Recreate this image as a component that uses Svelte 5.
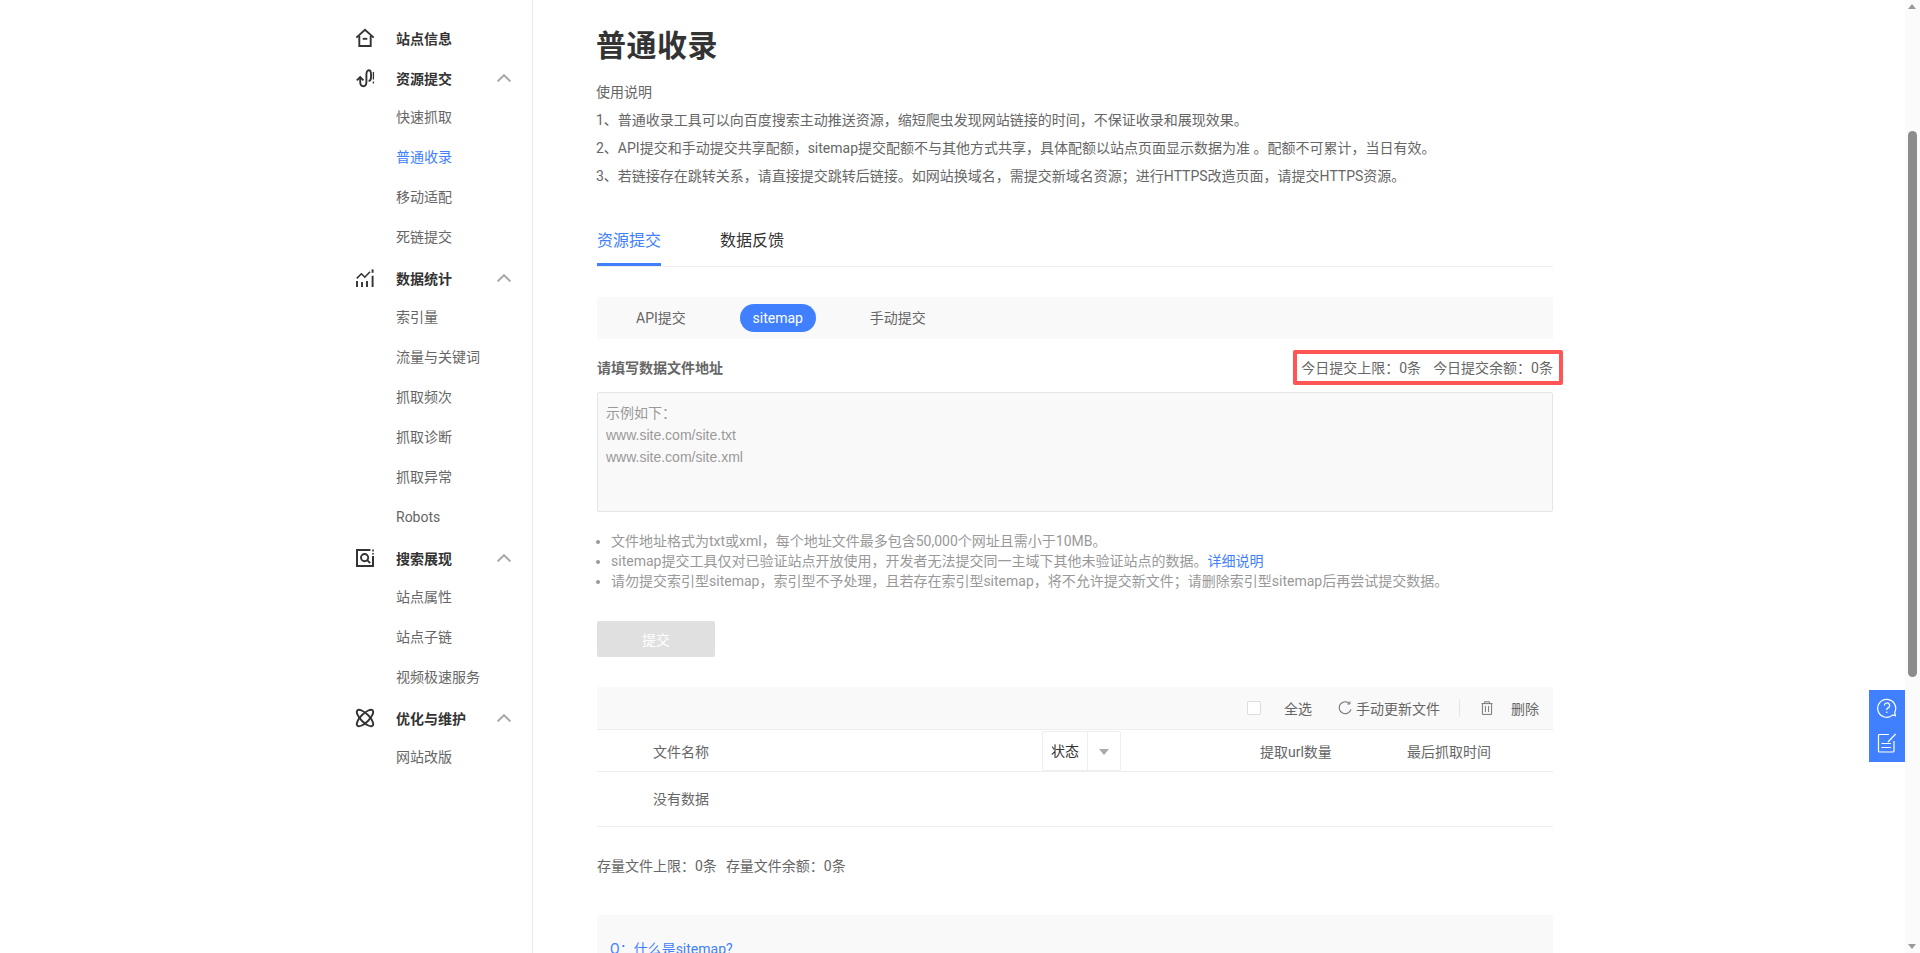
<script>
  const nav = [
    { title: '站点信息', icon: 'home', items: [] },
    { title: '资源提交', icon: 'link', open: true, items: ['快速抓取', '普通收录', '移动适配', '死链提交'] },
    { title: '数据统计', icon: 'stats', open: true, items: ['索引量', '流量与关键词', '抓取频次', '抓取诊断', '抓取异常', 'Robots'] },
    { title: '搜索展现', icon: 'search', open: true, items: ['站点属性', '站点子链', '视频极速服务'] },
    { title: '优化与维护', icon: 'atom', open: true, items: ['网站改版'] }
  ];
  const usage = [
    '使用说明',
    '1、普通收录工具可以向百度搜索主动推送资源，缩短爬虫发现网站链接的时间，不保证收录和展现效果。',
    '2、API提交和手动提交共享配额，sitemap提交配额不与其他方式共享，具体配额以站点页面显示数据为准 。配额不可累计，当日有效。',
    '3、若链接存在跳转关系，请直接提交跳转后链接。如网站换域名，需提交新域名资源；进行HTTPS改造页面，请提交HTTPS资源。'
  ];
</script>

<div class="page">
  <aside class="sidebar">
    {#each nav as group}
      <div class="nav-head">
        <svg class="nav-icon" viewBox="0 0 18 18" fill="none" stroke="#333" stroke-width="1.9">
          {#if group.icon === 'home'}
            <path d="M0.3 8.6 L9 0.8 L17.7 8.6" />
            <path d="M3.3 7 V17 H14.7 V7" />
            <path d="M6.7 9.8 H11.3" />
          {:else if group.icon === 'link'}
            <path d="M0.8 11.4 L4.2 8 L7.4 11.4" />
            <path d="M4.2 8.8 V13 C4.2 15.8 5.6 17.2 7.4 17.2 C9.4 17.2 10.4 15.6 10.4 13 V5.6 C10.4 2.8 11.4 1.2 12.8 1.2 C14.4 1.2 15 2.8 15 5.6 V8.4 C15 10.6 14 11.8 12.6 12" />
            <path d="M17.4 3 V10.6 M17.4 12.6 V14.4" stroke-width="1.3" />
          {:else if group.icon === 'stats'}
            <path d="M1 18 V12 M6 18 V13 M11 18 V12 M16.6 18 V6.8" />
            <path d="M0.8 9.4 L5.4 4.8 L8.8 8.2 L14 2.8" stroke-width="1.6" />
            <path d="M16.6 0.4 V3.8" />
          {:else if group.icon === 'search'}
            <path d="M14.4 1 H1 V17 H17 V7" stroke-width="2" />
            <path d="M17 0.4 V2.6 M17 4 V5.6" stroke-width="1.6" />
            <circle cx="8.6" cy="8.6" r="3.6" />
            <path d="M11.2 11.2 L14.2 14.2" />
          {:else}
            <ellipse cx="9" cy="9" rx="10.8" ry="4.2" transform="rotate(45 9 9)" />
            <ellipse cx="9" cy="9" rx="10.8" ry="4.2" transform="rotate(-45 9 9)" />
          {/if}
        </svg>
        <span class="nav-title">{group.title}</span>
        {#if group.open}
          <svg class="chev" viewBox="0 0 14 8" fill="none" stroke="#aaa" stroke-width="2"><path d="M0.6 7.4 L7 1.2 L13.4 7.4" /></svg>
        {/if}
      </div>
      {#each group.items as item}
        <div class="nav-item" class:active={item === '普通收录'}>{item}</div>
      {/each}
    {/each}
  </aside>

  <main class="main">
    <h1>普通收录</h1>
    <div class="usage">
      {#each usage as line}<p>{line}</p>{/each}
    </div>

    <div class="tabs">
      <div class="tab on">资源提交</div>
      <div class="tab">数据反馈</div>
    </div>

    <div class="seg">
      <span class="seg-text">API提交</span>
      <span class="pill">sitemap</span>
      <span class="seg-text">手动提交</span>
    </div>

    <div class="label-row">
      <strong>请填写数据文件地址</strong>
      <div class="quota">
        <span>今日提交上限：0条</span>
        <span>今日提交余额：0条</span>
        <i class="mark"></i>
      </div>
    </div>

    <div class="textarea">
      <div>示例如下：</div>
      <div>www.site.com/site.txt</div>
      <div>www.site.com/site.xml</div>
    </div>

    <ul class="notes">
      <li>文件地址格式为txt或xml，每个地址文件最多包含50,000个网址且需小于10MB。</li>
      <li>sitemap提交工具仅对已验证站点开放使用，开发者无法提交同一主域下其他未验证站点的数据。<a href="#top">详细说明</a></li>
      <li>请勿提交索引型sitemap，索引型不予处理，且若存在索引型sitemap，将不允许提交新文件；请删除索引型sitemap后再尝试提交数据。</li>
    </ul>

    <button class="submit" disabled>提交</button>

    <div class="toolbar">
      <span class="check"></span>
      <span class="all">全选</span>
      <svg class="refresh" viewBox="0 0 14 14" fill="none" stroke="#777" stroke-width="1.1">
        <path d="M11.6 2.6 A6 6 0 1 0 13 8.4" />
        <path d="M11.9 0.4 V3 H9.3" stroke-width="1" />
      </svg>
      <span class="update">手动更新文件</span>
      <i class="sep"></i>
      <svg class="trash" viewBox="0 0 12 14" fill="none" stroke="#777" stroke-width="1">
        <path d="M0.5 2.6 H11.5 M3.5 2.6 V0.8 H8.5 V2.6 M1.4 2.6 V13.4 H10.6 V2.6 M4.4 5 V11 M7.6 5 V11" />
      </svg>
      <span>删除</span>
    </div>

    <div class="thead">
      <span>文件名称</span>
      <div class="filter">
        <span class="f-label">状态</span>
        <span class="f-arrow"></span>
      </div>
      <span class="c-num">提取url数量</span>
      <span>最后抓取时间</span>
    </div>
    <div class="empty">没有数据</div>

    <div class="storage">
      <span>存量文件上限：0条</span>
      <span>存量文件余额：0条</span>
    </div>

    <div class="faq"><a href="#top">Q：什么是sitemap?</a></div>
  </main>

  <div class="scrollbar">
    <i class="arrow up"></i>
    <i class="thumb"></i>
    <i class="arrow down"></i>
  </div>

  <div class="float">
    <svg viewBox="0 0 20 20" fill="none" stroke="#fff" stroke-width="1.2">
      <path d="M18.4 17.8 L15.8 16.9 A9 9 0 1 1 17.7 14.4 Z" />
      <path d="M7.4 7.6 A2.6 2.6 0 1 1 10.6 10.1 C10 10.4 9.8 10.8 9.8 12" />
      <path d="M9.8 13.6 V15" />
    </svg>
    <svg viewBox="0 0 20 20" fill="none" stroke="#fff" stroke-width="1.2">
      <path d="M12 1.5 H2.5 A1 1 0 0 0 1.5 2.5 V18 A1 1 0 0 0 2.5 19 H16 A1 1 0 0 0 17 18 V8" />
      <path d="M11 9 L18.6 1" />
      <path d="M4.5 10.5 H14 M4.5 14.5 H14" />
    </svg>
  </div>
</div>

<style>
  :global(body) {
    margin: 0;
    overflow: hidden;
    background: #fff;
  }
  .page {
    position: relative;
    display: flex;
    height: 953px;
    overflow: hidden;
    font-family: Roboto, "Noto Sans CJK SC", sans-serif;
    font-size: 14px;
    color: #666;
  }
  .sidebar {
    flex: none;
    box-sizing: border-box;
    width: 533px;
    padding-top: 17px;
    border-right: 1px solid #e8e8e8;
  }
  .nav-head {
    display: flex;
    align-items: center;
    box-sizing: border-box;
    height: 36px;
    margin-top: 4px;
    padding: 0 0 2px 356px;
    color: #333;
    font-weight: 700;
  }
  .nav-icon {
    flex: none;
    width: 18px;
    height: 18px;
    overflow: visible;
  }
  .nav-title {
    margin-left: 22px;
    width: 101px;
  }
  .chev {
    flex: none;
    width: 14px;
    height: 8px;
  }
  .nav-item {
    height: 40px;
    line-height: 40px;
    padding-left: 396px;
  }
  .nav-item.active {
    color: #4080ff;
  }
  .main {
    flex: none;
    width: 956px;
    margin-left: 64px;
    padding-top: 26px;
  }
  h1 {
    margin: 0 0 0 -1px;
    font-size: 30px;
    line-height: 40px;
    letter-spacing: 0.5px;
    font-weight: 700;
    color: #333;
  }
  .usage {
    margin: 12px 0 0 -1px;
  }
  .usage p {
    margin: 0;
    line-height: 28px;
  }
  .tabs {
    display: flex;
    gap: 59px;
    margin-top: 29px;
    border-bottom: 1px solid #eee;
  }
  .tab {
    font-size: 16px;
    line-height: 44px;
    height: 47px;
    box-sizing: border-box;
    color: #333;
  }
  .tab.on {
    color: #4080ff;
    border-bottom: 3px solid #4080ff;
  }
  .seg {
    display: flex;
    align-items: center;
    gap: 54px;
    height: 42px;
    margin-top: 30px;
    padding-left: 39px;
    background: #f9f9f9;
  }
  .seg-text {
    margin-bottom: 2px;
  }
  .pill {
    width: 76px;
    height: 28px;
    line-height: 28px;
    text-align: center;
    border-radius: 14px;
    background: #4080ff;
    color: #fff;
  }
  .label-row {
    display: flex;
    justify-content: space-between;
    line-height: 20px;
    padding: 19px 0 14px;
  }
  .label-row strong {
    font-weight: 700;
    color: #666;
  }
  .quota {
    position: relative;
    display: flex;
    gap: 12px;
  }
  .mark {
    position: absolute;
    left: -8px;
    right: -10px;
    top: -8px;
    bottom: -7px;
    border: 4px solid #ff5555;
    border-radius: 2px;
  }
  .textarea {
    box-sizing: border-box;
    height: 120px;
    padding: 9px 8px;
    background: #f9f9f9;
    border: 1px solid #e5e5e5;
    border-radius: 2px;
    color: #999;
    line-height: 22px;
    font-family: "Liberation Sans", "Noto Sans CJK SC", sans-serif;
  }
  .notes {
    margin: 19px 0 0;
    padding: 0 0 0 14px;
    line-height: 20px;
    color: #999;
  }
  .notes a {
    color: #4080ff;
    text-decoration: none;
  }
  .submit {
    display: block;
    width: 118px;
    height: 36px;
    margin-top: 30px;
    padding: 0;
    border: 0;
    border-radius: 2px;
    background: #e0e0e0;
    color: #fff;
    font: inherit;
  }
  .toolbar {
    display: flex;
    justify-content: flex-end;
    align-items: center;
    box-sizing: border-box;
    height: 43px;
    margin-top: 30px;
    padding-right: 14px;
    background: #f9f9f9;
    border-bottom: 1px solid #eee;
  }
  .check {
    width: 12px;
    height: 12px;
    background: #fff;
    border: 1px solid #ddd;
    border-radius: 2px;
  }
  .all {
    margin-left: 23px;
  }
  .refresh {
    width: 14px;
    height: 14px;
    margin-left: 26px;
  }
  .update {
    margin-left: 4px;
  }
  .sep {
    width: 1px;
    height: 18px;
    margin: 0 21px 0 19px;
    background: #e5e5e5;
  }
  .trash {
    width: 12px;
    height: 14px;
    margin-right: 18px;
  }
  .thead {
    display: grid;
    grid-template-columns: 389px 79px 139px 147px 1fr;
    align-items: center;
    box-sizing: border-box;
    height: 42px;
    padding-left: 56px;
    border-bottom: 1px solid #eee;
  }
  .filter {
    display: flex;
    box-sizing: border-box;
    height: 40px;
    margin-top: 1px;
    border: 1px solid #eee;
    border-radius: 2px;
    color: #333;
  }
  .f-label {
    flex: none;
    width: 44px;
    line-height: 38px;
    text-align: center;
    border-right: 1px solid #eee;
  }
  .f-arrow {
    width: 0;
    height: 0;
    margin: 17px 0 0 11px;
    border: 5px solid transparent;
    border-top: 6px solid #aaa;
    border-bottom: 0;
  }
  .c-num {
    grid-column: 4;
  }
  .empty {
    box-sizing: border-box;
    height: 55px;
    line-height: 54px;
    padding-left: 56px;
    border-bottom: 1px solid #eee;
  }
  .storage {
    display: flex;
    gap: 9px;
    margin-top: 29px;
    line-height: 20px;
  }
  .faq {
    margin-top: 39px;
    height: 200px;
    padding: 24px 13px 0;
    line-height: 20px;
    background: #f9f9f9;
  }
  .faq a {
    color: #4080ff;
    text-decoration: none;
  }
  .scrollbar {
    position: absolute;
    top: 0;
    right: 0;
    bottom: 0;
    width: 15px;
    background: #fbfbfb;
  }
  .thumb {
    position: absolute;
    left: 3px;
    top: 131px;
    width: 9px;
    height: 546px;
    border-radius: 5px;
    background: #8c8c8c;
  }
  .arrow {
    position: absolute;
    left: 3px;
    width: 0;
    height: 0;
    border: 4.5px solid transparent;
  }
  .arrow.up {
    top: 4px;
    border-top: 0;
    border-bottom: 5px solid #999;
  }
  .arrow.down {
    bottom: 4px;
    border-bottom: 0;
    border-top: 5px solid #999;
  }
  .float {
    position: absolute;
    left: 1869px;
    top: 690px;
    display: flex;
    flex-direction: column;
    align-items: center;
    gap: 15px;
    box-sizing: border-box;
    width: 36px;
    height: 72px;
    padding-top: 8px;
    background: #4080ff;
  }
  .float svg {
    width: 20px;
    height: 20px;
  }
</style>
